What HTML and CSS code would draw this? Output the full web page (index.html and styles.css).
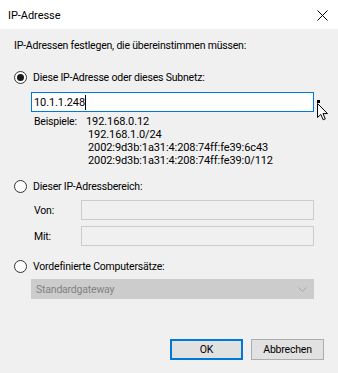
FILE: index.html
```html
<!DOCTYPE html>
<html lang="de">
<head>
<meta charset="utf-8">
<title>IP-Adresse</title>
<link rel="stylesheet" href="styles.css">
</head>
<body>
<div class="window">
  <div class="titlebar">
    <span class="title">IP-Adresse</span>
    <svg class="close" width="11" height="11" viewBox="0 0 11 11"><path d="M0.5 0.5 L10.5 10.5 M10.5 0.5 L0.5 10.5" stroke="#000" stroke-width="1" fill="none"/></svg>
  </div>
  <div class="content">
    <div class="intro">IP-Adressen festlegen, die übereinstimmen müssen:</div>

    <div class="radio-row first">
      <span class="radio checked"></span>
      <span class="label">Diese IP-Adresse oder dieses Subnetz:</span>
    </div>
    <div class="textbox focused"><span class="caret">10.1.1.248</span></div>
    <div class="examples">
      <div class="ex-label">Beispiele:</div>
      <div class="ex-values">
        <div class="ex-first">192.168.0.12</div>
        <div>192.168.1.0/24</div>
        <div>2002:9d3b:1a31:4:208:74ff:fe39:6c43</div>
        <div>2002:9d3b:1a31:4:208:74ff:fe39:0/112</div>
      </div>
    </div>

    <div class="radio-row second">
      <span class="radio"></span>
      <span class="label">Dieser IP-Adressbereich:</span>
    </div>
    <div class="range-row von">
      <span class="range-label">Von:</span>
      <div class="textbox disabled"></div>
    </div>
    <div class="range-row mit">
      <span class="range-label">Mit:</span>
      <div class="textbox disabled"></div>
    </div>

    <div class="radio-row third">
      <span class="radio"></span>
      <span class="label">Vordefinierte Computersätze:</span>
    </div>
    <div class="combo">
      <span>Standardgateway</span>
      <svg class="chevron" width="9" height="5" viewBox="0 0 9 5"><path d="M0.5 0.5 L4.5 4.5 L8.5 0.5" stroke="#a6a6a6" fill="none"/></svg>
    </div>

    <div class="buttons">
      <div class="btn default">OK</div>
      <div class="btn">Abbrechen</div>
    </div>
  </div>

  <div class="cursor">
    <span class="cursor-dot"></span>
    <svg class="cursor-arrow" width="12" height="18" viewBox="0 0 12 18"><path d="M0.5 0.5 L0.5 14.5 L3.8 11.4 L6.2 16.8 L8.3 15.9 L6 10.6 L10.5 10.6 Z" fill="#fff" stroke="#000" stroke-width="1" stroke-linejoin="miter"/></svg>
  </div>
</div>
</body>
</html>
```

FILE: styles.css
```css
html, body {
  margin: 0;
  padding: 0;
}
body {
  width: 338px;
  height: 373px;
  overflow: hidden;
  background: #f0f0f0;
  font-family: Roboto, "Liberation Sans", Arial, sans-serif;
  font-size: 10.5px;
  letter-spacing: -0.2px;
  color: #000;
}
.window {
  position: relative;
  width: 338px;
  height: 373px;
  background: #f0f0f0;
}
.titlebar {
  height: 29px;
  background: #fff;
  display: flex;
  align-items: center;
  justify-content: space-between;
  padding: 0 10px 0 8px;
}
.title {
  font-size: 11px;
  letter-spacing: -0.05px;
  line-height: 15px;
  padding-top: 1px;
}
.close {
  display: block;
  margin-top: 1px;
}
.content {
  display: flex;
  flex-direction: column;
  padding: 0 14px;
}
.intro {
  margin-top: 9px;
  line-height: 15px;
}
.radio-row {
  display: flex;
  align-items: center;
  height: 16px;
  gap: 6px;
}
.radio-row.first { margin-top: 16px; }
.radio-row.second { margin-top: 11px; }
.radio-row.third { margin-top: 12px; }
.radio {
  box-sizing: border-box;
  width: 13px;
  height: 13px;
  border: 1px solid #333;
  border-radius: 50%;
  background: #fff;
  display: flex;
  align-items: center;
  justify-content: center;
}
.radio.checked::after {
  content: "";
  width: 7px;
  height: 7px;
  border-radius: 50%;
  background: #1a1a1a;
}
.label {
  line-height: 15px;
}
.textbox {
  box-sizing: border-box;
  height: 20px;
  border: 1px solid #7a7a7a;
  background: #fff;
  padding: 0 2px;
  display: flex;
  align-items: center;
  line-height: 15px;
}
.textbox.focused {
  margin-top: 7px;
  margin-left: 17px;
  width: 283px;
  border-color: #0078d7;
  font-size: 11px;
  letter-spacing: -0.1px;
}
.caret {
  border-right: 1px solid #000;
}
.examples {
  display: flex;
  margin-top: 3px;
  margin-left: 20px;
  line-height: 13px;
}
.ex-label {
  flex: 0 0 52px;
}
.ex-values {
  font-size: 11px;
  letter-spacing: -0.1px;
}
.ex-values div {
  padding-left: 2px;
}
.ex-values .ex-first {
  padding-left: 0;
}
.range-row {
  display: flex;
  align-items: center;
  margin-left: 20px;
  margin-top: 6px;
}
.range-label {
  flex: 0 0 47px;
  line-height: 15px;
}
.textbox.disabled {
  width: 233px;
  background: #f0f0f0;
  border-color: #cccccc;
}
.combo {
  box-sizing: border-box;
  margin-top: 5px;
  margin-left: 17px;
  width: 283px;
  height: 20px;
  background: #cccccc;
  border: 1px solid #cccccc;
  color: #838383;
  display: flex;
  align-items: center;
  justify-content: space-between;
  padding: 0 6px 0 4px;
  line-height: 15px;
}
.chevron {
  display: block;
}
.buttons {
  display: flex;
  justify-content: flex-end;
  gap: 8px;
  margin-top: 40px;
}
.btn {
  box-sizing: border-box;
  width: 73px;
  height: 21px;
  background: #e1e1e1;
  border: 1px solid #adadad;
  display: flex;
  align-items: center;
  justify-content: center;
  line-height: 15px;
}
.btn.default {
  border: 2px solid #0078d7;
}
.cursor {
  position: absolute;
  left: 317px;
  top: 100px;
  width: 14px;
  height: 22px;
}
.cursor-dot {
  position: absolute;
  left: 0;
  top: 0;
  width: 3px;
  height: 3px;
  background: #000;
}
.cursor-arrow {
  position: absolute;
  left: 0;
  top: 3px;
  display: block;
}
```
